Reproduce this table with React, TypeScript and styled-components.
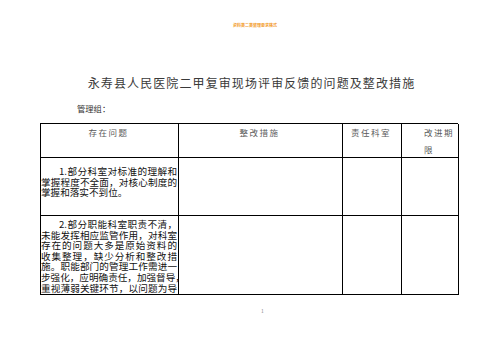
import React from 'react';
import styled, { createGlobalStyle } from 'styled-components';

const Global = createGlobalStyle`
  html, body { margin: 0; padding: 0; background: #fff; }
  body { font-family: "Noto Sans CJK SC", "Noto Sans", sans-serif; }
`;

const Page = styled.div`
  width: 503px;
  height: 356px;
  display: flex;
  flex-direction: column;
  overflow: hidden;
`;

const Watermark = styled.div`
  margin-top: 23px;
  height: 5px;
  line-height: 5px;
  font-size: 4px;
  font-weight: 700;
  color: #f29b2a;
  text-align: center;
  padding-left: 7px;
`;

const Title = styled.h1`
  margin: 47px 0 0;
  font-size: 12px;
  line-height: 16px;
  font-weight: 400;
  letter-spacing: 1.1px;
  color: #3a3a3a;
  text-align: center;
`;

const Group = styled.div`
  margin-top: 12px;
  padding-left: 77px;
  font-size: 8.3px;
  line-height: 10px;
  color: #333;
`;

const Grid = styled.div`
  margin: 10px 0 0 40px;
  width: 418px;
  display: grid;
  grid-template-columns: 138px 164px 59px 57px;
  grid-template-rows: 34px 58px 79px;
  border-top: 1px solid #000;
  border-left: 1px solid #000;
  box-sizing: border-box;
`;

const HeadCell = styled.div<{ $align?: 'center' | 'left' }>`
  border-right: 1px solid #000;
  border-bottom: 1px solid #000;
  font-size: 8.5px;
  line-height: 17px;
  letter-spacing: 1.5px;
  color: #5a5a5a;
  text-align: ${(p) => p.$align ?? 'center'};
  padding: 0 2px 0 ${(p) => (p.$align === 'left' ? '22px' : '0')};
  overflow: hidden;
`;

const BodyCell = styled.div<{ $top: number }>`
  border-right: 1px solid #000;
  border-bottom: 1px solid #000;
  padding: ${(p) => p.$top}px 1px 0 0;
  overflow: hidden;
  font-size: 9.6px;
  line-height: 10.6px;
  color: #111;
`;

const Line = styled.span<{ $first?: boolean; $last?: boolean }>`
  display: block;
  white-space: nowrap;
  text-align: justify;
  text-align-last: ${(p) => (p.$last ? 'left' : 'justify')};
  text-indent: ${(p) => (p.$first ? '18px' : '0')};
`;

const EmptyCell = styled.div`
  border-right: 1px solid #000;
  border-bottom: 1px solid #000;
`;

const PageNo = styled.div`
  margin-top: 13px;
  padding-left: 261px;
  font-size: 5px;
  line-height: 6px;
  color: #888;
`;

const row1 = ['1.部分科室对标准的理解和', '掌握程度不全面，对核心制度的', '掌握和落实不到位。'];
const row2 = [
  '2.部分职能科室职责不清，',
  '未能发挥相应监管作用，对科室',
  '存在的问题大多是原始资料的',
  '收集整理，缺少分析和整改措',
  '施。职能部门的管理工作需进一',
  '步强化，应明确责任，加强督导，',
  '重视薄弱关键环节，以问题为导',
];

function Paragraph({ lines, open }: { lines: string[]; open?: boolean }) {
  return (
    <>
      {lines.map((l, i) => (
        <Line key={i} $first={i === 0} $last={!open && i === lines.length - 1}>
          {l}
        </Line>
      ))}
    </>
  );
}

export default function App() {
  return (
    <Page>
      <Global />
      <Watermark>资料类二类整理要求格式</Watermark>
      <Title>永寿县人民医院二甲复审现场评审反馈的问题及整改措施</Title>
      <Group>管理组：</Group>
      <Grid>
        <HeadCell>存在问题</HeadCell>
        <HeadCell>整改措施</HeadCell>
        <HeadCell>责任科室</HeadCell>
        <HeadCell $align="left">改进期限</HeadCell>
        <BodyCell $top={8}>
          <Paragraph lines={row1} />
        </BodyCell>
        <EmptyCell />
        <EmptyCell />
        <EmptyCell />
        <BodyCell $top={3}>
          <Paragraph lines={row2} open />
        </BodyCell>
        <EmptyCell />
        <EmptyCell />
        <EmptyCell />
      </Grid>
      <PageNo>1</PageNo>
    </Page>
  );
}
